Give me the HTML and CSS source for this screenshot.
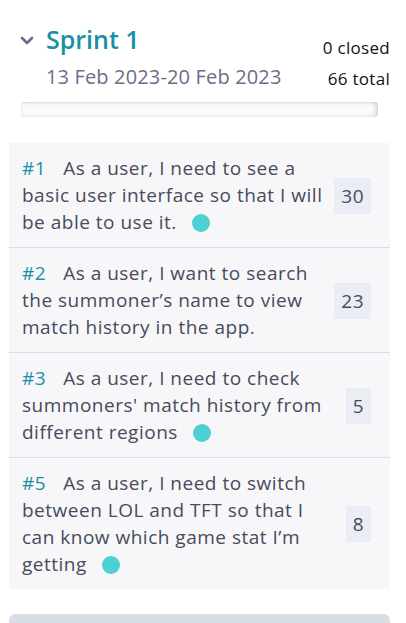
FILE: index.html
```html
<!DOCTYPE html>
<html>
<head>
<meta charset="utf-8">
<link rel="stylesheet" href="styles.css">
</head>
<body>
<div class="sprint">
  <div class="head">
    <div class="title-block">
      <div class="title-row">
        <svg class="chev" width="14" height="9" viewBox="0 0 14 9"><path d="M2 2 L7 7 L12 2" fill="none" stroke="#6b6987" stroke-width="2.6" stroke-linecap="round" stroke-linejoin="round"/></svg>
        <span class="title">Sprint 1</span>
      </div>
      <div class="dates">13 Feb 2023-20 Feb 2023</div>
    </div>
    <div class="stats">
      <div>0 closed</div>
      <div>66 total</div>
    </div>
  </div>
  <div class="progress"></div>
  <div class="list">
    <div class="item">
      <p class="text"><span class="id">#1</span><span class="desc">As a user, I need to see a basic user interface so that I will be able to use it.</span> <span class="dot"></span></p>
      <div class="pts">30</div>
    </div>
    <div class="item">
      <p class="text"><span class="id">#2</span><span class="desc">As a user, I want to search the summoner’s name to view match history in the app.</span></p>
      <div class="pts">23</div>
    </div>
    <div class="item">
      <p class="text"><span class="id">#3</span><span class="desc">As a user, I need to check summoners' match history from different regions</span> <span class="dot"></span></p>
      <div class="pts">5</div>
    </div>
    <div class="item">
      <p class="text"><span class="id">#5</span><span class="desc">As a user, I need to switch between LOL and TFT so that I can know which game stat I’m getting</span> <span class="dot"></span></p>
      <div class="pts">8</div>
    </div>
  </div>
  <div class="next"></div>
</div>
</body>
</html>
```

FILE: styles.css
```css
* { box-sizing: border-box; }
html, body { margin: 0; padding: 0; background: #fff; }
body {
  font-family: "Open Sans", "Noto Sans", sans-serif;
  color: #4a4a5e;
  width: 406px;
  height: 623px;
  overflow: hidden;
}
.sprint { padding: 23px 16px 0 9px; }
.head {
  display: flex;
  justify-content: space-between;
  align-items: flex-start;
  padding-left: 11px;
}
.title-row { display: flex; align-items: center; gap: 12px; }
.chev { display: block; margin-top: 2px; }
.title {
  font-size: 25px;
  font-weight: 600;
  color: #1a8fa6;
  line-height: 32px;
}
.dates {
  margin-left: 26px;
  margin-top: 7px;
  font-size: 20px;
  letter-spacing: 0.15px;
  color: #6e6c88;
  line-height: 30px;
}
.stats {
  text-align: right;
  font-size: 17px;
  letter-spacing: 0.3px;
  color: #111;
  line-height: 31px;
  padding-top: 9px;
}
.progress {
  margin: 8px 12px 0 12px;
  height: 15px;
  border-radius: 3px;
  background: #fafafa;
  box-shadow: inset -3px 0 4px rgba(0,0,0,0.12), inset 0 1px 3px rgba(0,0,0,0.08);
}
.list {
  margin-top: 26px;
  background: #f7f7fa;
}
.item {
  display: flex;
  align-items: center;
  padding: 12px 19px 11px 13px;
  border-bottom: 1px solid #d8dde9;
}
.item:last-child { border-bottom: none; }
.text {
  flex: 1;
  margin: 0;
  font-size: 19px;
  letter-spacing: 0.5px;
  line-height: 27px;
  color: #474b5c;
  padding-right: 5px;
}
.id { color: #1a8fa6; margin-right: 17px; }
.dot {
  display: inline-block;
  width: 18px;
  height: 18px;
  border-radius: 50%;
  background: #4dd0d3;
  margin-left: 10px;
  vertical-align: -3px;
}
.pts {
  background: #eaedf3;
  font-size: 19px;
  letter-spacing: 0.5px;
  line-height: 36px;
  padding: 0 7px;
  color: #474b5c;
}
.next {
  margin-top: 25px;
  height: 20px;
  background: #d8dde6;
  border-radius: 6px 6px 0 0;
}
```
